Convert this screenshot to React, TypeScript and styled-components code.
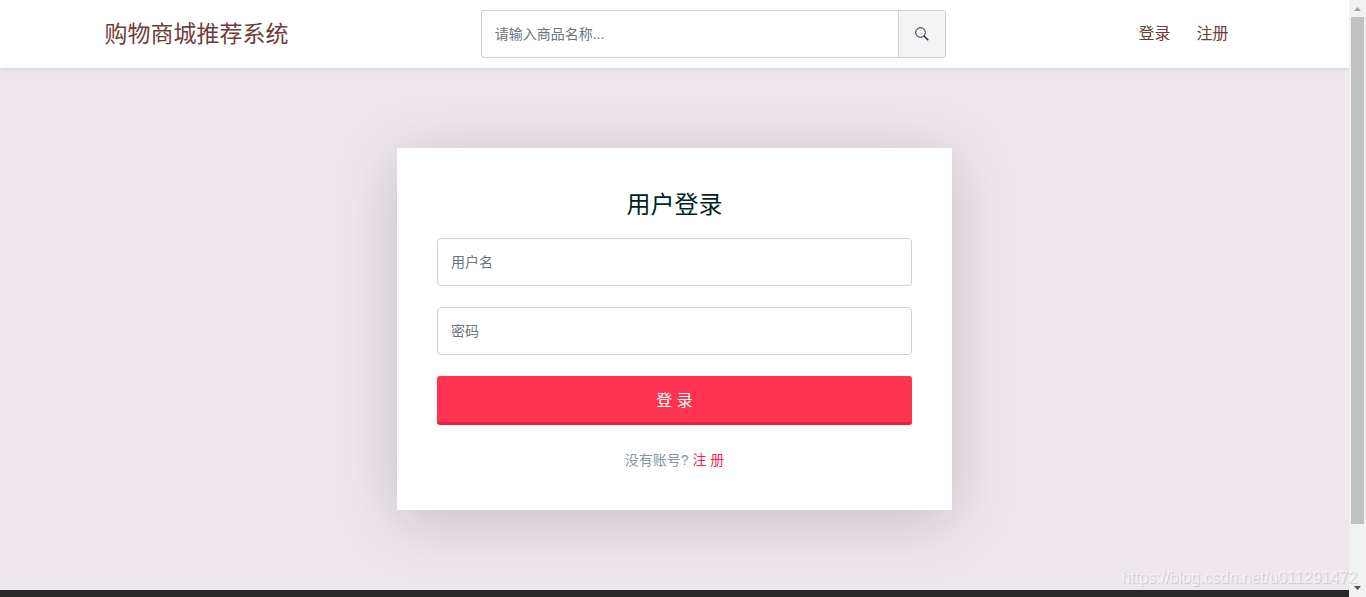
import React from "react";
import styled, { createGlobalStyle } from "styled-components";

const GlobalStyle = createGlobalStyle`
  * { box-sizing: border-box; }
  body {
    margin: 0;
    background: #eee7ee;
    font-family: "Liberation Sans", "Noto Sans CJK SC", sans-serif;
    font-size: 14px;
    line-height: 20px;
  }
  a { text-decoration: none; }
  button, input { font: inherit; }
`;

const Shell = styled.div`
  display: flex;
  height: 100vh;
  overflow: hidden;
`;

const Page = styled.div`
  flex: 1;
  min-width: 0;
  display: flex;
  flex-direction: column;
  overflow: hidden;
`;

const Header = styled.header`
  flex: none;
  background: #fff;
  box-shadow: 0 1px 5px rgba(0, 0, 0, 0.1);
  padding: 10px 15px;
  z-index: 1;
`;

const HeaderInner = styled.div`
  max-width: 1140px;
  margin: 0 auto;
  display: grid;
  grid-template-columns: 33% minmax(0, 465px) 1fr;
  align-items: center;
`;

const Brand = styled.a`
  color: #6f3c3c;
  font-size: 23px;
  line-height: 32px;
  white-space: nowrap;
`;

const SearchForm = styled.form`
  display: flex;
  height: 48px;
`;

const Field = styled.input`
  width: 100%;
  min-width: 0;
  height: 48px;
  padding: 0 13px;
  border: 1px solid #cdd0da;
  border-radius: 4px;
  background: #fff;
  color: #495057;
  outline: none;
  &::placeholder { color: #6c757d; opacity: 1; }
`;

const SearchField = styled(Field)`
  flex: 1;
  border-right: 0;
  border-radius: 3px 0 0 3px;
`;

const SearchButton = styled.button`
  flex: none;
  width: 48px;
  display: grid;
  place-items: center;
  padding: 0;
  border: 1px solid #cdd0da;
  border-radius: 0 3px 3px 0;
  background: #f3f3f3;
  color: #2d1a3a;
`;

const Nav = styled.nav`
  display: flex;
  justify-content: flex-end;
  gap: 26px;
  padding-right: 16px;
`;

const NavLink = styled.a`
  color: #6f3c3c;
  font-size: 16px;
  line-height: 22px;
`;

const Main = styled.main`
  flex: none;
  display: flex;
  justify-content: center;
  padding: 80px 15px;
`;

const Card = styled.form`
  width: 100%;
  max-width: 555px;
  padding: 40px;
  background: #fff;
  box-shadow: 0 10px 60px rgba(0, 0, 0, 0.18);
`;

const Title = styled.h1`
  margin: 0 0 16px;
  color: #02241f;
  font-size: 24px;
  line-height: 34px;
  font-weight: 400;
  text-align: center;
`;

const Fields = styled.div`
  display: flex;
  flex-direction: column;
  gap: 21px;
`;

const Submit = styled.button`
  height: 49px;
  padding: 3px 0 0;
  border: 0;
  border-bottom: 3px solid #ea1f3a;
  border-radius: 3px;
  background: #ff334f;
  color: #fff;
  font-size: 16px;
`;

const Hint = styled.p`
  margin: 25px 0 0;
  color: #8795a1;
  text-align: center;
`;

const HintLink = styled.a`
  color: #ff2046;
`;

const Footer = styled.footer`
  flex: 1;
  background: #282828;
`;

const Scrollbar = styled.div`
  flex: none;
  width: 17px;
  display: flex;
  flex-direction: column;
  background: #f1f1f1;
`;

const ScrollArrow = styled.svg`
  flex: none;
  width: 17px;
  height: 17px;
  display: block;
`;

const ScrollTrack = styled.div`
  flex: 1;
  padding: 0 2px;
`;

const ScrollThumb = styled.div`
  height: 90%;
  background: #c1c1c1;
`;

const Watermark = styled.span`
  position: absolute;
  right: 9px;
  bottom: 9px;
  z-index: 2;
  color: rgba(255, 255, 255, 0.6);
  font-size: 16px;
  text-shadow: 1px 1px 1px rgba(0, 0, 0, 0.14);
  pointer-events: none;
`;

export default function App() {
  return (
    <Shell>
      <GlobalStyle />
      <Page>
        <Header>
          <HeaderInner>
            <Brand href="#">购物商城推荐系统</Brand>
            <SearchForm role="search">
              <SearchField type="search" aria-label="商品名称" placeholder="请输入商品名称..." />
              <SearchButton type="button" aria-label="搜索">
                <svg width="14" height="14" viewBox="0 0 14 14" fill="none" stroke="currentColor">
                  <circle cx="5.5" cy="5.5" r="4.800" strokeWidth="1" />
                  <path d="M9 9l4.300 4.300" strokeWidth="1.300" />
                </svg>
              </SearchButton>
            </SearchForm>
            <Nav>
              <NavLink href="#login">登录</NavLink>
              <NavLink href="#register">注册</NavLink>
            </Nav>
          </HeaderInner>
        </Header>
        <Main>
          <Card>
            <Title>用户登录</Title>
            <Fields>
              <Field type="text" aria-label="用户名" placeholder="用户名" />
              <Field type="password" aria-label="密码" placeholder="密码" />
              <Submit type="button">登 录</Submit>
            </Fields>
            <Hint>
              没有账号? <HintLink href="#register">注 册</HintLink>
            </Hint>
          </Card>
        </Main>
        <Footer />
      </Page>
      <Scrollbar aria-hidden="true">
        <ScrollArrow viewBox="0 0 17 17">
          <path d="M5 11h7L8.500 7z" fill="#a3a3a3" />
        </ScrollArrow>
        <ScrollTrack>
          <ScrollThumb />
        </ScrollTrack>
        <ScrollArrow viewBox="0 0 17 17">
          <path d="M5 6h7L8.500 10z" fill="#505050" />
        </ScrollArrow>
      </Scrollbar>
      <Watermark>https://blog.csdn.net/u011291472</Watermark>
    </Shell>
  );
}
